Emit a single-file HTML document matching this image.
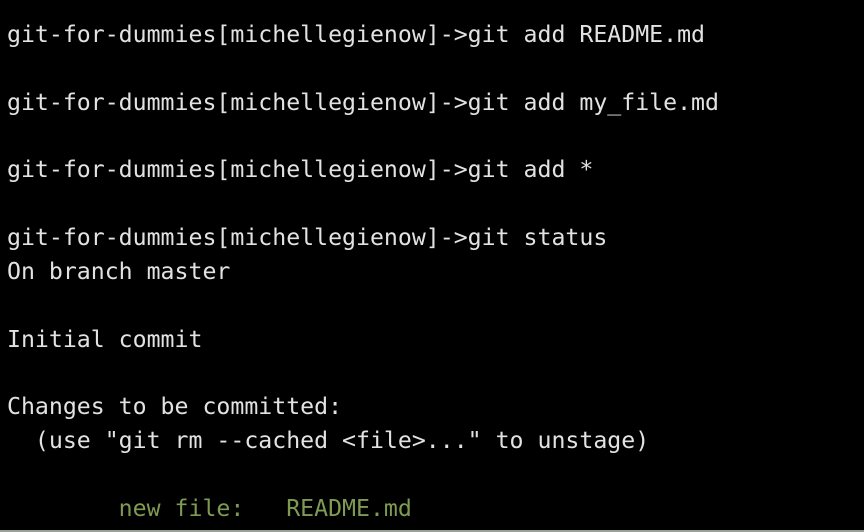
<!DOCTYPE html>
<html><head><style>
html,body{margin:0;padding:0;background:#000;width:864px;height:532px;overflow:hidden}
pre{position:absolute;left:7px;top:18px;margin:0;font-family:"DejaVu Sans Mono","Liberation Mono",monospace;font-size:23.2px;line-height:33.85px;color:#e2e2e2}
.g{color:#7f9a52}
.b{position:absolute;left:0;bottom:0;width:864px;height:2px;background:#9a9f9a}
</style></head><body>
<pre>git-for-dummies[michellegienow]-&gt;git add README.md

git-for-dummies[michellegienow]-&gt;git add my_file.md

git-for-dummies[michellegienow]-&gt;git add *

git-for-dummies[michellegienow]-&gt;git status
On branch master

Initial commit

Changes to be committed:
  (use "git rm --cached &lt;file&gt;..." to unstage)

<span class="g">        new file:   README.md</span></pre>
<div class="b"></div>
</body></html>
